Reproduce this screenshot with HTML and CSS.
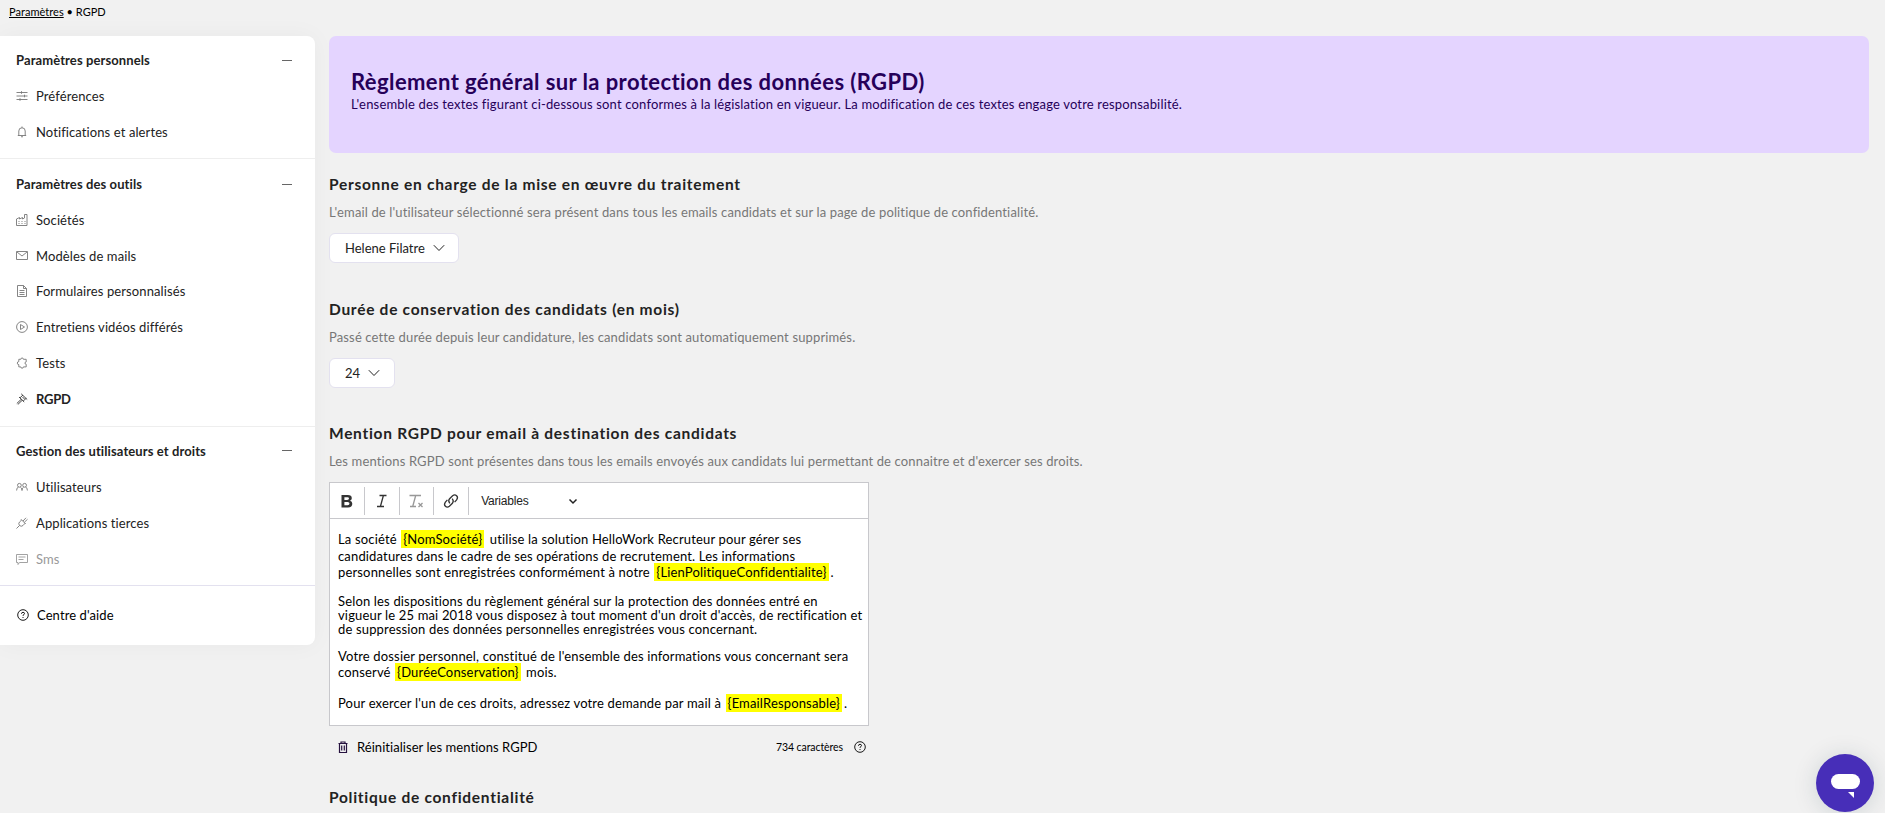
FILE: index.html
```html
<!DOCTYPE html>
<html lang="fr">
<head>
  <meta charset="UTF-8" />
  <meta name="viewport" content="width=device-width, initial-scale=1.0" />
  <title>RGPD</title>
  <link rel="stylesheet" href="styles.css">
</head>
<body>
  <nav class="breadcrumb"><a href="#">Paramètres</a> • RGPD</nav>

  <div class="page">
    <aside class="sidebar">
      <section class="group">
        <h4>Paramètres personnels <i class="minus"></i></h4>
        <a class="item" href="#"><svg class="icon" viewBox="0 0 12 12"><path d="M0.5 2.5h11M0.5 6h11M0.5 9.500h11M5.500 1.200v2.600M8.500 4.700v2.600M4 8.200v2.600"/></svg>Préférences</a>
        <a class="item" href="#"><svg class="icon" viewBox="0 0 12 12"><path d="M1.800 9.500h8.400M2.800 9.500V5a3.200 3.200 0 0 1 6.400 0v4.500M6 0.500v1.300M5 10.500q1 1 2 0"/></svg>Notifications et alertes</a>
      </section>

      <section class="group tools">
        <h4>Paramètres des outils <i class="minus"></i></h4>
        <a class="item" href="#"><svg class="icon" viewBox="0 0 12 12"><path d="M0.500 11.500V5l3-1.500V5l3-1.500V5l2-1V0.500h2.500v11zM2.500 7.500h1M5.500 7.500h1M8.500 7.500h1M2.500 9.500h1M5.500 9.500h1M8.500 9.500h1"/></svg>Sociétés</a>
        <a class="item" href="#"><svg class="icon" viewBox="0 0 12 12"><path d="M0.500 1.500h11v8h-11zM1 2l5 4 5-4"/></svg>Modèles de mails</a>
        <a class="item" href="#"><svg class="icon" viewBox="0 0 12 12"><path d="M1.500 0.500h6l3 3v8h-9zM7.500 0.500v3h3M3.500 5.500h5M3.500 7.500h5M3.500 9.500h5"/></svg>Formulaires personnalisés</a>
        <a class="item" href="#"><svg class="icon" viewBox="0 0 12 12"><circle cx="6" cy="6" r="5.400"/><path d="M4.500 3.500v5l4-2.500z"/></svg>Entretiens vidéos différés</a>
        <a class="item" href="#"><svg class="icon" viewBox="0 0 12 12"><path d="M2.800 2.300h2a1.300 1.300 0 1 1 2.600 0h2.800v2.600a1.200 1.200 0 1 0 0 2.400v2.600H7.400a1.300 1.300 0 1 1-2.600 0h-2V7.600a1.500 1.500 0 1 1 0-3z"/></svg>Tests</a>
        <a class="item active" href="#"><svg class="icon" viewBox="0 0 12 12"><path d="M5.200 0.800l6 5.700M3 4l5.200 5M4 4.800l3-2.800M7.200 8l3-2.700M6.500 4l2 2M5.300 6.200L0.800 10.500M6.300 7.200L1.800 11.500"/></svg>RGPD</a>
      </section>

      <section class="group">
        <h4>Gestion des utilisateurs et droits <i class="minus"></i></h4>
        <a class="item" href="#"><svg class="icon" viewBox="0 0 12 12"><circle cx="3.400" cy="4.300" r="1.900"/><circle cx="8.600" cy="4.300" r="1.900"/><path d="M0.600 9.500q0-3 1.900-3.500M6 9.500q-.2-3-1.700-3.500M6 9.500q.2-3 1.700-3.500M11.400 9.500q0-3-1.900-3.500"/></svg>Utilisateurs</a>
        <a class="item" href="#"><svg class="icon" viewBox="0 0 12 12"><path d="M5 2.300l4.700 4.700M5.700 3L3.500 5q-1.500 1.700 0 3.500 1.800 1.500 3.500 0L9 6.300M0.500 11.500l3-3M7 4l3-3.200M8.300 5.300l3.200-3"/></svg>Applications tierces</a>
        <a class="item disabled" href="#"><svg class="icon" viewBox="0 0 12 12"><path d="M0.500 1.500h11v8h-8l-1.500 2v-2h-1.500zM2.500 4h7M2.500 6.500h5"/></svg>Sms</a>
      </section>

      <a class="help" href="#"><svg class="icon" viewBox="0 0 12 12"><circle cx="6" cy="6" r="5.300"/><path d="M4.500 4.800q0-1.500 1.500-1.500t1.500 1.300q0 .8-1.500 1.700v.6M6 8v1"/></svg>Centre d'aide</a>
    </aside>

    <main class="content">
      <header class="banner">
        <h1>Règlement général sur la protection des données (RGPD)</h1>
        <p>L'ensemble des textes figurant ci-dessous sont conformes à la législation en vigueur. La modification de ces textes engage votre responsabilité.</p>
      </header>

      <section class="block">
        <h3>Personne en charge de la mise en œuvre du traitement</h3>
        <p class="desc">L'email de l'utilisateur sélectionné sera présent dans tous les emails candidats et sur la page de politique de confidentialité.</p>
        <button class="select">Helene Filatre <svg class="chevron" viewBox="0 0 12 8"><path d="M0.800 1.200L6 6.500l5.200-5.300"/></svg></button>
      </section>

      <section class="block">
        <h3>Durée de conservation des candidats (en mois)</h3>
        <p class="desc">Passé cette durée depuis leur candidature, les candidats sont automatiquement supprimés.</p>
        <button class="select">24 <svg class="chevron" viewBox="0 0 12 8"><path d="M0.800 1.200L6 6.500l5.200-5.300"/></svg></button>
      </section>

      <section class="mentions">
        <h3>Mention RGPD pour email à destination des candidats</h3>
        <p class="desc">Les mentions RGPD sont présentes dans tous les emails envoyés aux candidats lui permettant de connaitre et d'exercer ses droits.</p>

        <div class="editor">
          <div class="toolbar">
            <button><svg viewBox="0 0 20 20"><path class="solid" d="M4.500 4h6.300q4 0 4 3.200 0 1.800-1.800 2.600 2.300.6 2.300 3 0 3.700-4.300 3.700H4.500zM7.400 6.200v2.700h2.800q1.800 0 1.800-1.400t-1.800-1.300zM7.400 11v3.200h3.200q1.900 0 1.900-1.600T10.600 11z"/></svg></button>
            <button><svg viewBox="0 0 20 20"><path d="M7.500 4.500h7M5 15.500h7M11.400 4.500l-3 11"/></svg></button>
            <button class="off"><svg viewBox="0 0 20 20"><path d="M3.500 4.500h11.500M9.700 4.500l-3 11M4 15.500h6M12.500 12l4 4M16.500 12l-4 4"/></svg></button>
            <button><svg viewBox="0 0 20 20"><path d="M8.800 12.300q-2-2.400-.2-4.600l3-3q2.200-1.700 4 0t0 4.200l-2 2.200M11.200 7.700q2 2.400.2 4.600l-3 3q-2.200 1.700-4 0t0-4.200l2-2.200"/></svg></button>
            <div class="variables">Variables <svg viewBox="0 0 10 10"><path d="M1.500 3.500L5 7l3.500-3.500"/></svg></div>
          </div>
          <div class="editor-body">
            <p class="tall">La société <mark>{NomSociété}</mark> utilise la solution HelloWork Recruteur pour gérer ses<br>candidatures dans le cadre de ses opérations de recrutement. Les informations<br>personnelles sont enregistrées conformément à notre <mark>{LienPolitiqueConfidentialite}</mark>.</p>
            <p>Selon les dispositions du règlement général sur la protection des données entré en<br>vigueur le 25 mai 2018 vous disposez à tout moment d'un droit d'accès, de rectification et<br>de suppression des données personnelles enregistrées vous concernant.</p>
            <p class="tall">Votre dossier personnel, constitué de l'ensemble des informations vous concernant sera<br>conservé <mark>{DuréeConservation}</mark> mois.</p>
            <p class="tall">Pour exercer l'un de ces droits, adressez votre demande par mail à <mark>{EmailResponsable}</mark>.</p>
          </div>
        </div>

        <div class="editor-footer">
          <a class="reset" href="#"><svg class="trash" viewBox="0 0 10 12"><path d="M0.500 2.500h9M3 2.500V1h4v1.500M1.500 2.500v9h7v-9M3.700 4.500v5M6.300 4.500v5"/></svg>Réinitialiser les mentions RGPD</a>
          <span class="count">734 caractères</span>
          <svg class="icon dark" viewBox="0 0 12 12"><circle cx="6" cy="6" r="5.300"/><path d="M4.500 4.800q0-1.500 1.500-1.500t1.500 1.300q0 .8-1.500 1.700v.6M6 8v1"/></svg>
        </div>
      </section>

      <h3>Politique de confidentialité</h3>
    </main>
  </div>

  <button class="chat"><svg viewBox="0 0 58 58"><rect x="15" y="20" width="29" height="15" rx="7.500"/><path d="M32 38h6v6z"/></svg></button>
</body>
</html>
```
FILE: styles.css
```css
* {
  box-sizing: border-box;
}

body {
  margin: 0;
  height: 813px;
  overflow: hidden;
  background-color: #f1f1f1;
  color: #222;
  font-family: Lato, "Open Sans", sans-serif;
  font-size: 13px;
}

h1, h3, h4, p {
  margin: 0;
}

a {
  color: inherit;
  text-decoration: none;
}

button {
  border: none;
  padding: 0;
  background: none;
  font: inherit;
  color: inherit;
}

svg {
  fill: none;
  stroke: currentColor;
  flex: none;
}

.breadcrumb {
  height: 36px;
  padding: 5px 9px;
  font-size: 11px;
  line-height: 14px;
  letter-spacing: 0.03px;
  color: #000;
}

.breadcrumb a {
  text-decoration: underline;
}

.page {
  display: flex;
  align-items: flex-start;
}

/* Menu latéral */
.sidebar {
  width: 315px;
  height: 609px;
  margin-right: 14px;
  background-color: #fff;
  border-radius: 0 8px 8px 0;
  box-shadow: 0 0 24px rgba(0, 0, 0, 0.04);
}

.group {
  padding: 6px 23px 8px 16px;
  border-bottom: 1px solid #eee;
}

.group h4 {
  display: flex;
  justify-content: space-between;
  align-items: center;
  height: 36px;
  font-size: 13px;
  letter-spacing: 0.1px;
}

.minus {
  width: 10px;
  height: 1px;
  background-color: #666;
}

.item, .help {
  display: flex;
  align-items: center;
  gap: 8px;
  height: 36px;
  letter-spacing: 0.1px;
}

.tools {
  padding-top: 7px;
  padding-bottom: 9px;
}

.tools .item {
  height: 35.8px;
}

.group:nth-of-type(3) {
  border-bottom-color: #e3e1ef;
}

.icon {
  width: 12px;
  height: 12px;
  stroke-width: 0.9;
  color: #777;
}

.item.active {
  font-weight: bold;
  letter-spacing: -0.2px;
}

.item.active .icon {
  color: #333;
}

.item.disabled, .item.disabled .icon {
  color: #999;
}

.help {
  height: 58px;
  padding-left: 17px;
  color: #000;
}

.help .icon, .icon.dark {
  color: #000;
}

/* Contenu */
.content {
  flex: 1;
  padding-right: 16px;
}

.banner {
  height: 117px;
  padding: 33px 22px;
  margin-bottom: 22px;
  background-color: #e4d4ff;
  border-radius: 7px;
  color: #260059;
}

.banner h1 {
  font-size: 22px;
  line-height: 26px;
  letter-spacing: 0.41px;
}

.banner p {
  line-height: 18px;
  letter-spacing: 0.17px;
}

h3 {
  font-size: 15.5px;
  line-height: 18px;
  letter-spacing: 0.72px;
}

.desc {
  margin: 10px 0 12px;
  line-height: 18px;
  letter-spacing: 0.14px;
  color: #777;
}

.block {
  height: 124.5px;
}

.select {
  display: flex;
  align-items: center;
  gap: 8px;
  height: 30px;
  padding: 0 13.5px 0 15px;
  background-color: #fff;
  border: 1px solid #e3e1ef;
  border-radius: 6px;
}

.chevron {
  width: 12px;
  height: 8px;
}

/* Éditeur */
.editor {
  width: 540px;
  height: 244px;
  background-color: #fff;
  border: 1px solid #c8c8cc;
}

.toolbar {
  display: flex;
  align-items: center;
  height: 36px;
  border-bottom: 1px solid #c8c8cc;
}

.toolbar button {
  display: flex;
  align-items: center;
  justify-content: center;
  width: 34.8px;
  height: 28px;
  border-right: 1px solid #c8c8cc;
}

.toolbar button svg {
  width: 20px;
  height: 20px;
  stroke: #333;
  stroke-width: 1.3;
}

.toolbar .solid {
  fill: #333;
  fill-rule: evenodd;
  stroke: none;
}

.toolbar .off svg {
  opacity: 0.5;
}

.variables {
  display: flex;
  align-items: center;
  justify-content: space-between;
  width: 109px;
  padding-left: 12px;
  font-family: "Liberation Sans", Arial, sans-serif;
  font-size: 12px;
  letter-spacing: -0.2px;
}

.variables svg {
  width: 10px;
  height: 10px;
  stroke-width: 1.5;
}

.editor-body {
  padding: 12px 8px;
  line-height: 14px;
  letter-spacing: 0.16px;
  color: #000;
  white-space: nowrap;
}

.editor-body p {
  margin-bottom: 12px;
}

.editor-body .tall {
  margin-bottom: 14px;
  line-height: 16.5px;
}

.editor-body .tall:first-child {
  margin-bottom: 13px;
}

mark {
  margin: 0 2px 0 1px;
  padding: 1px 2px;
  background-color: #ff0;
}

.editor-footer {
  display: flex;
  align-items: center;
  width: 540px;
  height: 42px;
  padding: 0 3px 0 9px;
  margin-bottom: 20px;
  color: #000;
}

.reset {
  display: flex;
  align-items: center;
  gap: 9px;
  letter-spacing: 0.05px;
}

.trash {
  width: 10px;
  height: 12px;
  stroke: #26123f;
  stroke-width: 1.2;
}

.count {
  margin: 0 11px 0 auto;
  font-size: 10.5px;
  letter-spacing: -0.08px;
}

/* Bulle de discussion */
.chat {
  position: absolute;
  left: 1816px;
  top: 754px;
  width: 58px;
  height: 58px;
  border-radius: 50%;
  background-color: #472eb8;
  box-shadow: 0 2px 24px rgba(0, 50, 60, 0.15);
}

.chat svg {
  display: block;
  fill: #fff;
  stroke: none;
}
```
